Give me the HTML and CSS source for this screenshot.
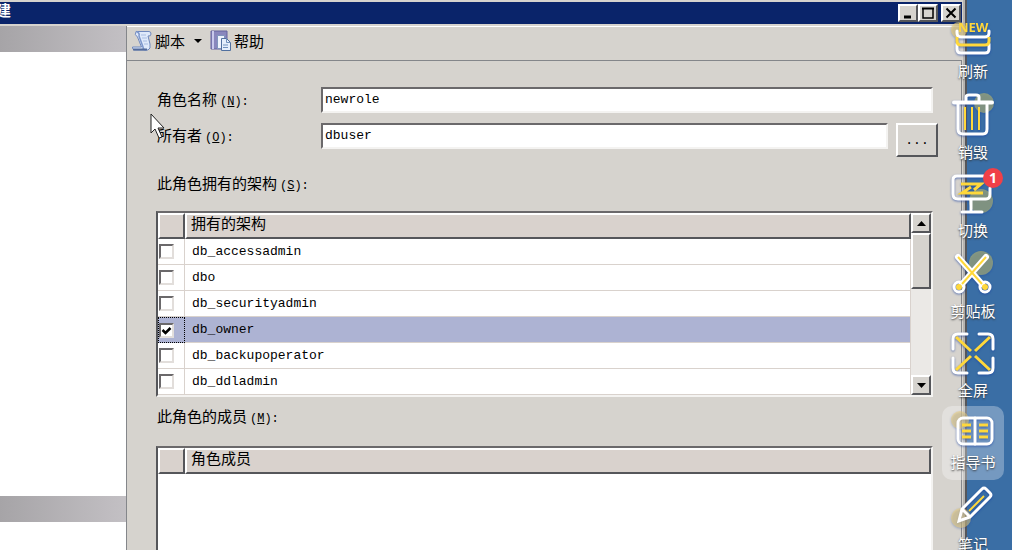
FILE: index.html
```
<!DOCTYPE html>
<html lang="zh-CN">
<head>
    <meta charset="UTF-8" />
    <title>新建数据库角色</title>
    <link rel="stylesheet" href="styles.css">
</head>
<body>

<div class="window">
    <header class="titlebar">
        <span class="title">建</span>
        <button class="win-btn" aria-label="最小化"><svg width="14" height="12"><path d="M3 10h7" stroke="#000" stroke-width="3"/></svg></button>
        <button class="win-btn" aria-label="最大化"><svg width="14" height="12"><path d="M2 1v10h10V1" fill="none" stroke="#000" stroke-width="1.500"/><path d="M1 1.500h12" stroke="#000" stroke-width="2"/></svg></button>
        <button class="win-btn win-close" aria-label="关闭"><svg width="14" height="12"><path d="M2.500 1.500l9 9M11.500 1.500l-9 9" stroke="#000" stroke-width="2"/></svg></button>
    </header>

    <div class="window-body">
        <!-- 左侧导航 -->
        <aside class="nav">
            <div class="nav-band"></div>
            <div class="nav-pages"></div>
            <div class="nav-band"></div>
            <div class="nav-rest"></div>
        </aside>

        <main class="page">
            <div class="toolbar">
                <button class="tool">
                    <svg width="22" height="22" viewBox="0 0 22 22">
                        <path d="M5 1.500h13q2 0 2 2.500t-3 2l2 8q1 5-2 6H3q-2-1-1.500-3h9L6.500 7Q3 5 5 1.500z" fill="#dfe9fa" stroke="#6f88bd"/>
                        <path d="M5.500 1.500Q9 3 8 6l4 11q0 3 3 3" fill="none" stroke="#7d97cc" stroke-width="1.500"/>
                        <path d="M10 5h5M11 8h5M12 11h4M13 14h4" stroke="#a9bde2"/>
                        <path d="M2 19.500h14" stroke="#536a9b" stroke-width="2"/>
                    </svg>
                    脚本
                </button>
                <button class="tool-arrow" aria-label="脚本选项"><svg width="8" height="4"><path d="M0 0h8L4 4z"/></svg></button>
                <button class="tool">
                    <svg width="22" height="22" viewBox="0 0 22 22">
                        <path d="M1 1h16v18H1z" fill="#8987bd" stroke="#65639e"/>
                        <path d="M3 1v18" stroke="#c9c9ec" stroke-width="2"/>
                        <path d="M7.500 5.500h7v13h-7z" fill="#eef3fc" stroke="#8095bd"/>
                        <path d="M11.500 8.500h5l4 4v8h-9z" fill="#e5effc" stroke="#51709f"/>
                        <path d="M16.500 8.500v4h4M13 15h5M13 17.500h5" fill="none" stroke="#7191bd"/>
                    </svg>
                    帮助
                </button>
            </div>

            <form class="form">
                <div class="row">
                    <label for="roleName">角色名称<span class="key">(<u>N</u>):</span></label>
                    <input type="text" id="roleName" value="newrole">
                </div>
                <div class="row row-owner">
                    <label for="owner">所有者<span class="key">(<u>O</u>):</span></label>
                    <input type="text" id="owner" value="dbuser">
                    <button type="button" class="browse">...</button>
                </div>

                <p class="caption">此角色拥有的架构<span class="key">(<u>S</u>):</span></p>
                <div class="list">
                    <table>
                        <thead>
                        <tr><th class="check"></th><th>拥有的架构</th></tr>
                        </thead>
                        <tbody>
                        <tr><td class="check"><input type="checkbox" id="s1"></td><td><label for="s1">db_accessadmin</label></td></tr>
                        <tr><td class="check"><input type="checkbox" id="s2"></td><td><label for="s2">dbo</label></td></tr>
                        <tr><td class="check"><input type="checkbox" id="s3"></td><td><label for="s3">db_securityadmin</label></td></tr>
                        <tr class="selected"><td class="check"><input type="checkbox" id="s4" checked></td><td><label for="s4">db_owner</label></td></tr>
                        <tr><td class="check"><input type="checkbox" id="s5"></td><td><label for="s5">db_backupoperator</label></td></tr>
                        <tr><td class="check"><input type="checkbox" id="s6"></td><td><label for="s6">db_ddladmin</label></td></tr>
                        </tbody>
                    </table>
                    <div class="scrollbar">
                        <button type="button" class="scroll-btn" aria-label="向上"><svg width="9" height="5"><path d="M0 5h9L4.500 0z"/></svg></button>
                        <div class="thumb"></div>
                        <div class="track"></div>
                        <button type="button" class="scroll-btn" aria-label="向下"><svg width="9" height="5"><path d="M0 0h9L4.500 5z"/></svg></button>
                    </div>
                </div>

                <p class="caption caption-members">此角色的成员<span class="key">(<u>M</u>):</span></p>
                <div class="list list-members">
                    <table>
                        <thead>
                        <tr><th class="check"></th><th>角色成员</th></tr>
                        </thead>
                    </table>
                </div>
            </form>
        </main>
    </div>
</div>

<!-- 悬浮工具条 -->
<nav class="dock">
    <button class="dock-item">
        <svg width="46" height="35" viewBox="0 0 46 35">
            <circle cx="9" cy="10" r="8" fill="#f5d472" opacity=".6"/>
            <path d="M7 11v2q0 4 4 4h24q4 0 4-4v-2M7 24v5q0 4 4 4h24q4 0 4-4v-5" class="line"/>
            <path d="M7 17v4q0 4 4 4h24q4 0 4-4v-4" class="accent"/>
            <text x="8" y="12" class="new">NEW</text>
        </svg>
        刷新
    </button>
    <button class="dock-item">
        <svg width="46" height="43" viewBox="0 0 46 43">
            <circle cx="34" cy="10" r="10" class="dot"/>
            <path d="M8 10v26q0 5 5 5h20q4 0 4-5V10M16 8V4q0-2 3-2h7q3 0 3 2v4" class="line"/>
            <path d="M4 9.500h38" class="line bar"/>
            <path d="M15 14v23M22 14v23M29 14v23" class="accent thin"/>
        </svg>
        销毁
    </button>
    <button class="dock-item">
        <svg width="46" height="40" viewBox="0 0 46 40">
            <circle cx="31" cy="27" r="12" class="dot"/>
            <path d="M34 2H7Q3 2 3 6v14q0 5 5 5h28q4 0 4-5v-6M21 26v11M12 38h20" class="line"/>
            <path d="M11 10h20l-7 6M33 19H12l9-6" class="accent"/>
        </svg>
        切换
        <span class="badge">1</span>
    </button>
    <button class="dock-item">
        <svg width="46" height="43" viewBox="0 0 46 43">
            <circle cx="31" cy="11" r="12" class="dot"/>
            <path d="M8 5L32 32M36 5L12 32" class="line blade"/>
            <circle cx="9" cy="35" r="5" class="line"/><circle cx="35" cy="35" r="5" class="line"/>
            <path d="M8 5L32 32M36 5L12 32" class="accent thin"/>
            <circle cx="9" cy="35" r="3" fill="#ffd83b"/><circle cx="35" cy="35" r="3" fill="#ffd83b"/>
        </svg>
        剪贴板
    </button>
    <button class="dock-item">
        <svg width="46" height="41" viewBox="0 0 46 41">
            <path d="M6 4l15 14M40 4L25 18M6 37l15-14M40 37L25 23" class="accent"/>
            <path d="M3 16V6q0-5 5-5h9M29 1h9q5 0 5 5v10M3 25v10q0 5 5 5h9M29 40h9q5 0 5-5V25" class="line"/>
        </svg>
        全屏
    </button>
    <button class="dock-item active">
        <svg width="46" height="30" viewBox="0 0 46 30">
            <circle cx="10" cy="4" r="9" fill="#f5d472" opacity=".5"/>
            <rect x="8" y="2" width="34" height="26" rx="5" class="line"/>
            <path d="M25 2v26" class="line"/>
            <path d="M12 9h9M12 15h9M12 21h9M29 9h9M29 15h9M29 21h9" class="accent"/>
        </svg>
        指导书
    </button>
    <button class="dock-item">
        <svg width="46" height="42" viewBox="0 0 46 42">
            <circle cx="11" cy="32" r="10" fill="#f5d472" opacity=".5"/>
            <path d="M12 23L32 3q2-2 4 0l4 4q2 2 0 4L20 31l-11 4zM12 23l8 8" class="line"/>
            <path d="M19 25L34 10" class="accent thin"/>
        </svg>
        笔记
    </button>
</nav>

<svg class="cursor" width="17" height="26" viewBox="0 0 17 26">
    <path d="M1 1v19l4-4 4 9 3-1-4-9h6z" fill="#fff" stroke="#222"/>
</svg>

</body>
</html>
```
FILE: styles.css
```
* {
    box-sizing: border-box;
}
body {
    margin: 0;
    height: 100vh;
    overflow: hidden;
    position: relative;
    background: #3a6ea5;
    color: #000;
    font-family: "Liberation Mono", "Noto Sans CJK SC", monospace;
    font-size: 15px;
}
button, input {
    font: inherit;
    color: inherit;
}
button {
    padding: 0;
    border: none;
    background: none;
}

/* Окно */
.window {
    display: flex;
    flex-direction: column;
    height: 100%;
    margin-right: 45px;
    padding: 2px 3px 0 0;
    background: #d6d3ce;
    border-right: 2px solid #55565a;
    box-shadow: inset -2px 0 #b5b3b0;
}
.titlebar {
    display: flex;
    align-items: center;
    height: 22px;
    background: #0a246a;
}
.title {
    flex: 1;
    margin-left: -4px;
    line-height: 20px;
    color: #fff;
    font-weight: bold;
}
.win-btn {
    display: flex;
    align-items: center;
    justify-content: center;
    width: 20px;
    height: 18px;
    background: #d6d3ce;
    border: 2px solid;
    border-color: #fff #55565a #55565a #fff;
}
.win-close {
    margin: 0 1px 0 3px;
}
.window-body {
    display: flex;
    flex: 1;
    min-height: 0;
    margin-top: 2px;
}

/* Левая панель */
.nav {
    display: flex;
    flex-direction: column;
    flex: 0 0 126px;
    background: #fff;
}
.nav-band {
    height: 26px;
    background: linear-gradient(90deg, #a6a4a7, #c3c0c4);
}
.nav-pages {
    flex: 1;
}
.nav-rest {
    height: 28px;
}

.page {
    display: flex;
    flex-direction: column;
    flex: 1;
    min-width: 0;
    border-left: 1px solid #84868a;
}
.toolbar {
    display: flex;
    align-items: center;
    height: 35px;
    padding: 0 4px 6px;
    border-top: 1px solid #fff;
    border-bottom: 1px solid #84868a;
}
.tool {
    display: flex;
    align-items: center;
    gap: 2px;
}
.tool-arrow {
    display: flex;
    width: 25px;
    padding-left: 9px;
}

/* Форма */
.form {
    display: flex;
    flex-direction: column;
    flex: 1;
    padding: 26px 28px 0 29px;
    border-right: 1px solid #84868a;
}
.row {
    display: flex;
    align-items: flex-start;
    margin-bottom: 10px;
}
.row label {
    flex: 0 0 165px;
    height: 26px;
    padding-left: 1px;
    line-height: 30px;
}
.row input {
    flex: 1;
    min-width: 0;
    height: 26px;
    padding: 0 2px 2px;
    font-size: 13px;
    background: #fff;
    border: 2px solid;
    border-color: #6b696b #f4f3f1 #f4f3f1 #6b696b;
    outline: none;
}
.row-owner {
    margin: 0 -5px 19px 0;
}
.key {
    margin-left: 3px;
    font-size: 12px;
}
.browse {
    width: 42px;
    height: 34px;
    margin-left: 8px;
    font-size: 13px;
    border: 2px solid;
    border-color: #fff #55565a #55565a #fff;
}
.caption {
    margin: 0 0 15px;
    padding-left: 1px;
    line-height: 20px;
}
.caption-members {
    margin: 12px 0 17px;
}

/* Списки */
.list {
    display: flex;
    border: 2px solid;
    border-color: #6b696b #f4f3f1 #f4f3f1 #55565a;
    background: #fff;
}
.list-members {
    flex: 1;
    align-items: flex-start;
    border-bottom: none;
}
table {
    flex: 1;
    border-collapse: separate;
    border-spacing: 0;
    table-layout: fixed;
    width: 100%;
}
th {
    height: 26px;
    padding: 0 4px;
    line-height: 20px;
    text-align: left;
    font-weight: normal;
    background: #d9d2cd;
    border: 2px solid;
    border-color: #fff #55565a #55565a #fff;
}
td {
    height: 26px;
    padding: 0 7px;
    line-height: 20px;
    font-size: 13px;
    border-bottom: 1px solid #d9d2cd;
    border-right: 1px solid #d9d2cd;
}
.check {
    width: 27px;
    padding: 0 1px;
}
.selected td {
    background: #adb3d3;
}
.selected .check {
    border: 1px dotted #000;
    padding-left: 0;
}
input[type="checkbox"] {
    appearance: none;
    display: block;
    width: 15px;
    height: 15px;
    margin: 0;
    background: #fff;
    border: 2px solid;
    border-color: #6b696b #e2dedb #e2dedb #6b696b;
}
input[type="checkbox"]:checked {
    background: #fff url("data:image/svg+xml,%3Csvg xmlns='http://www.w3.org/2000/svg' viewBox='0 0 11 11'%3E%3Cpath d='M1.500 5l3 3 5-5' fill='none' stroke='%23000' stroke-width='2.500'/%3E%3C/svg%3E");
}

.scrollbar {
    display: flex;
    flex-direction: column;
    width: 20px;
}
.scroll-btn {
    display: flex;
    align-items: center;
    justify-content: center;
    height: 20px;
}
.scroll-btn, .thumb {
    background: #d6d3ce;
    border: 2px solid;
    border-color: #fff #55565a #55565a #fff;
}
.thumb {
    height: 56px;
}
.track {
    flex: 1;
    background: #ebe9e6;
}

/* Плавающая панель */
.dock {
    position: absolute;
    top: 14px;
    right: 8px;
    display: flex;
    flex-direction: column;
    width: 62px;
}
.dock-item {
    position: relative;
    display: flex;
    flex-direction: column;
    align-items: center;
    gap: 6px;
    padding: 6px 0;
    line-height: 20px;
    color: #fff;
    font-family: "Noto Sans CJK SC", sans-serif;
    text-shadow: 0 1px 2px #333;
}
.dock-item svg {
    overflow: visible;
    filter: drop-shadow(0 1px 1px rgba(20, 60, 160, .6));
}
.dock-item.active {
    padding: 10px 0 8px;
    border-radius: 10px;
    background: rgba(255, 255, 255, .3);
}
.line {
    fill: none;
    stroke: #fff;
    stroke-width: 3;
    stroke-linecap: round;
}
.bar {
    stroke-width: 4;
}
.blade {
    stroke-width: 6;
}
.accent {
    fill: none;
    stroke: #ffd83b;
    stroke-width: 3;
}
.thin {
    stroke-width: 2;
}
.dot {
    fill: #b9b76a;
    opacity: .6;
}
.new {
    fill: #ffd83b;
    font: bold 13px "Open Sans", sans-serif;
    text-shadow: none;
}
.badge {
    position: absolute;
    top: 0;
    right: 1px;
    width: 20px;
    height: 20px;
    border-radius: 50%;
    background: #f04048;
    font: bold 14px/20px "Open Sans", sans-serif;
    text-align: center;
    text-shadow: none;
}

.cursor {
    position: absolute;
    top: 113px;
    left: 150px;
}
```
